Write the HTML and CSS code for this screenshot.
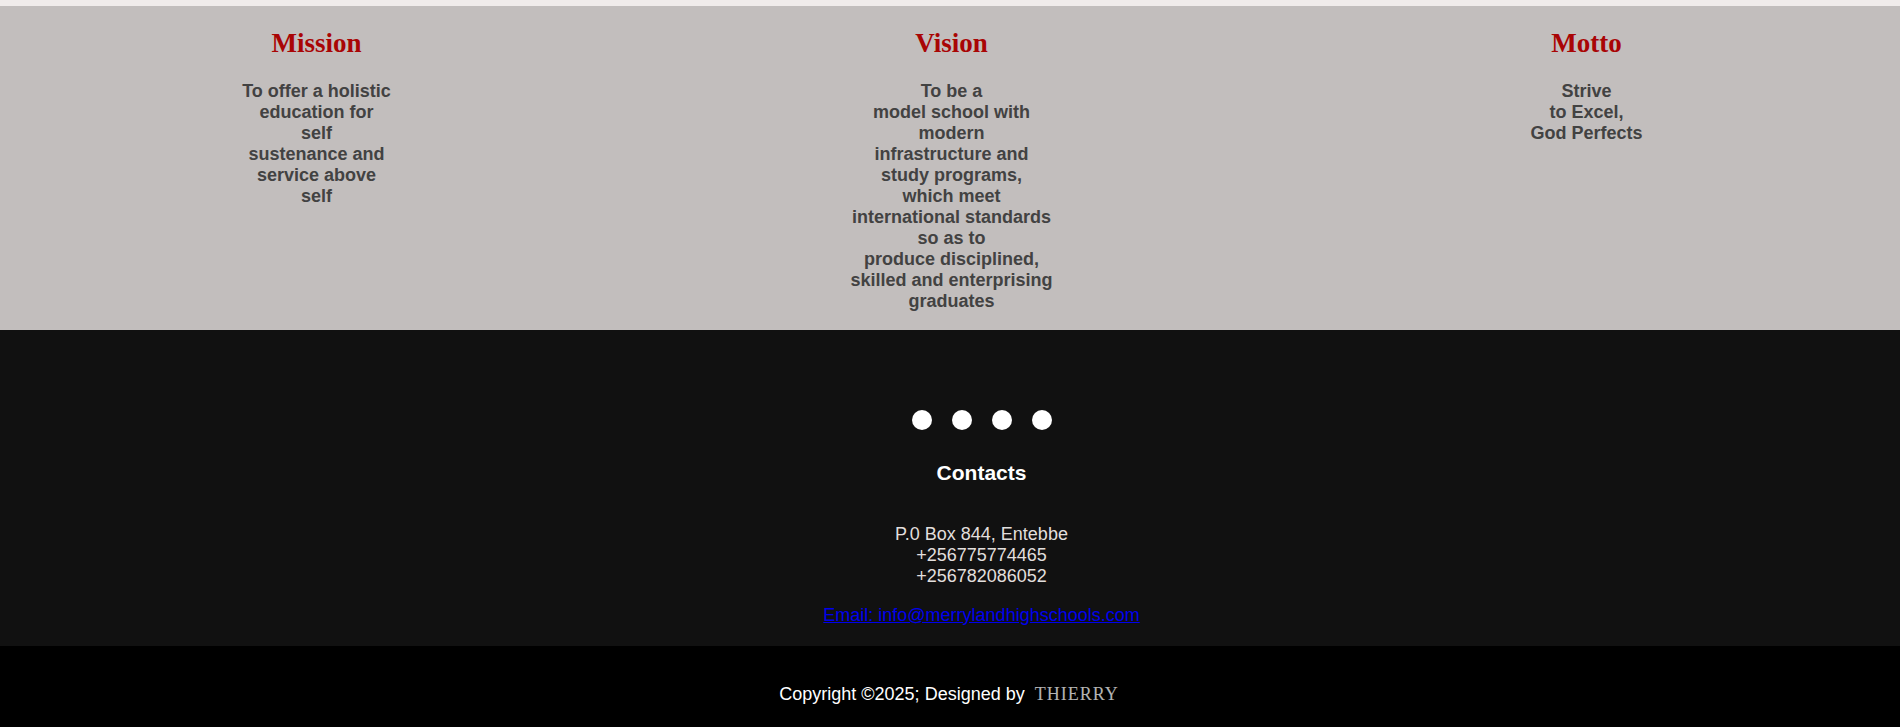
FILE: index.html
```html
<!DOCTYPE html>
<html lang="en">
<head>
<meta charset="utf-8">
<title>Merryland High School</title>
<link rel="stylesheet" href="styles.css">
</head>
<body>
<main class="values">
  <section class="value">
    <h2 class="value-title">Mission</h2>
    <p class="value-text">To offer a holistic<br>education for<br>self<br>sustenance and<br>service above<br>self</p>
  </section>
  <section class="value">
    <h2 class="value-title">Vision</h2>
    <p class="value-text">To be a<br>model school with<br>modern<br>infrastructure and<br>study programs,<br>which meet<br>international standards<br>so as to<br>produce disciplined,<br>skilled and enterprising<br>graduates</p>
  </section>
  <section class="value">
    <h2 class="value-title">Motto</h2>
    <p class="value-text">Strive<br>to Excel,<br>God Perfects</p>
  </section>
</main>
<footer>
  <div class="contact">
    <div class="socials">
      <a class="social" href="#" aria-label="Facebook"></a>
      <a class="social" href="#" aria-label="Twitter"></a>
      <a class="social" href="#" aria-label="Instagram"></a>
      <a class="social" href="#" aria-label="YouTube"></a>
    </div>
    <h3 class="contact-title">Contacts</h3>
    <p class="contact-text">P.0 Box 844, Entebbe<br>+256775774465<br>+256782086052</p>
    <p class="contact-text"><a class="email" href="mailto:info@merrylandhighschools.com">Email: info@merrylandhighschools.com</a></p>
  </div>
  <div class="copyright">
    <p class="copyright-text">Copyright ©2025; Designed by <span class="designer">THIERRY</span></p>
  </div>
</footer>
</body>
</html>
```
FILE: styles.css
```css
body {
  margin: 0;
  background: #f0eceb;
  font-family: "Liberation Sans", Arial, sans-serif;
  font-size: 18px;
  line-height: 21px;
}

h2, h3, p {
  margin: 0;
}

.values {
  display: grid;
  grid-template-columns: repeat(3, 1fr);
  gap: 8px;
  margin-top: 6px;
  padding: 22px 0 18px 3px;
  background: #c2bebd;
  text-align: center;
}

.value-title {
  margin-bottom: 22px;
  color: #a90505;
  font: bold 27px/31px "Liberation Serif", "Times New Roman", serif;
}

.value-text {
  color: #424242;
  font-weight: bold;
}

.contact {
  display: flex;
  flex-direction: column;
  align-items: center;
  padding: 80px 0 20px 63px;
  background: #111;
  text-align: center;
}

.socials {
  display: flex;
  gap: 20px;
}

.social {
  width: 20px;
  height: 20px;
  border-radius: 50%;
  background: #fff;
}

.contact-title {
  margin: 31px 0 39px;
  color: #fff;
  font-size: 21px;
  line-height: 24px;
}

.contact-text {
  color: #e2dfdd;
}

.contact-text + .contact-text {
  margin-top: 18px;
}

.email {
  color: #0000ee;
}

.copyright {
  padding: 38px 2px 22px 0;
  background: #000;
  color: #fff;
  text-align: center;
}

.designer {
  margin-left: 5px;
  color: #fff;
  font-family: "Liberation Serif", "Times New Roman", serif;
  letter-spacing: 1px;
  opacity: 0.7;
}
```
